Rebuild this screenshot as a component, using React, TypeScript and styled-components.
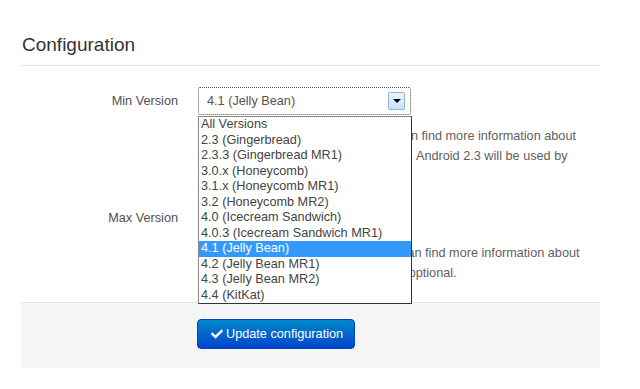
import styled, { createGlobalStyle } from 'styled-components'
import { FaCheck } from 'react-icons/fa'

const versions = [
  'All Versions',
  '2.3 (Gingerbread)',
  '2.3.3 (Gingerbread MR1)',
  '3.0.x (Honeycomb)',
  '3.1.x (Honeycomb MR1)',
  '3.2 (Honeycomb MR2)',
  '4.0 (Icecream Sandwich)',
  '4.0.3 (Icecream Sandwich MR1)',
  '4.1 (Jelly Bean)',
  '4.2 (Jelly Bean MR1)',
  '4.3 (Jelly Bean MR2)',
  '4.4 (KitKat)',
]

const selected = '4.1 (Jelly Bean)'

export default function App() {
  return (
    <>
      <GlobalStyle />
      <Form>
        <Legend>Configuration</Legend>

        <ControlGroup>
          <Label>Min Version</Label>
          <Controls>
            <SelectWrap>
              <Select $focused>
                <SelectValue>{selected}</SelectValue>
                <ArrowButton>
                  <Arrow />
                </ArrowButton>
              </Select>
              {/* open list of the focused select, drawn over the help text */}
              <DropdownList>
                {versions.map((v) => (
                  <Option key={v} $active={v === selected}>
                    {v}
                  </Option>
                ))}
              </DropdownList>
            </SelectWrap>
            <HelpBlock>
              The minimum Android version. You can find more information about
              <br />
              Android versions online. If not chosen, Android 2.3 will be used by
              <br />
              default.
            </HelpBlock>
          </Controls>
        </ControlGroup>

        <ControlGroup>
          <Label>Max Version</Label>
          <Controls>
            <SelectWrap>
              <Select>
                <SelectValue>All Versions</SelectValue>
                <ArrowButton>
                  <Arrow />
                </ArrowButton>
              </Select>
            </SelectWrap>
            <HelpBlock>
              The maximum Android version. You can find more information about
              <br />
              Android versions online. The value is optional.
            </HelpBlock>
          </Controls>
        </ControlGroup>

        <FormActions>
          <PrimaryButton>
            <FaCheck size={12} />
            Update configuration
          </PrimaryButton>
        </FormActions>
      </Form>
    </>
  )
}

const GlobalStyle = createGlobalStyle`
  body {
    margin: 0;
    background: #ffffff;
    font-family: "Liberation Sans", Arial, Helvetica, sans-serif;
    font-size: 12.7px;
    color: #555555;
  }
`

const Form = styled.div`
  width: 579px;
  margin-left: 21px;
  padding-top: 25px;
`

const Legend = styled.div`
  height: 40px;
  line-height: 40px;
  padding-left: 1px;
  font-size: 19px;
  color: #333333;
  border-bottom: 1px solid #e5e5e5;
  margin-bottom: 21px;
`

const ControlGroup = styled.div`
  display: flex;
  margin-bottom: 18px;
`

const Label = styled.div`
  width: 157px;
  flex-shrink: 0;
  text-align: right;
  line-height: 28px;
  color: #505050;
`

const Controls = styled.div`
  margin-left: 20px;
  flex: 1;
`

const SelectWrap = styled.div`
  position: relative;
  width: 213px;
`

const Select = styled.div<{ $focused?: boolean }>`
  box-sizing: border-box;
  height: 28px;
  width: 213px;
  display: flex;
  align-items: center;
  justify-content: space-between;
  padding: 0 5px 0 8px;
  border: 1px ${(p) => (p.$focused ? 'dotted #555555' : 'solid #cccccc')};
  border-radius: 2px;
  background: #ffffff;
  color: #555555;
`

const SelectValue = styled.span`
  white-space: nowrap;
`

const ArrowButton = styled.div`
  box-sizing: border-box;
  width: 17px;
  height: 18px;
  display: flex;
  align-items: center;
  justify-content: center;
  border: 1px solid #8fb4d6;
  border-radius: 2px;
  background: linear-gradient(#eef6fd, #c6e1f7);
`

const Arrow = styled.span`
  width: 0;
  height: 0;
  border-left: 4px solid transparent;
  border-right: 4px solid transparent;
  border-top: 4px solid #000000;
`

const DropdownList = styled.div`
  position: absolute;
  top: 29px;
  left: 0;
  z-index: 10;
  box-sizing: border-box;
  width: 214px;
  background: #ffffff;
  border: 1px solid #8a8a8a;
  border-right-color: #333333;
  border-bottom-color: #333333;
`

const Option = styled.div<{ $active?: boolean }>`
  height: 15.5px;
  line-height: 15.5px;
  padding-left: 2px;
  white-space: nowrap;
  color: ${(p) => (p.$active ? '#ffffff' : '#444444')};
  background: ${(p) => (p.$active ? '#3399ff' : 'transparent')};
`

const HelpBlock = styled.div`
  margin-top: 11px;
  line-height: 20px;
  color: #606060;
  white-space: nowrap;
`

const FormActions = styled.div`
  border-top: 1px solid #e5e5e5;
  background: #f5f5f5;
  padding: 16px 0 19px 176px;
  margin-top: 19px;
`

const PrimaryButton = styled.button`
  box-sizing: border-box;
  height: 30px;
  display: inline-flex;
  align-items: center;
  gap: 3px;
  padding: 0 11px 0 13px;
  border: 1px solid #0044bb;
  border-radius: 4px;
  background: linear-gradient(#0088cc, #0044cc);
  color: #ffffff;
  font-family: "Liberation Sans", Arial, Helvetica, sans-serif;
  font-size: 12.7px;
  cursor: pointer;
`
